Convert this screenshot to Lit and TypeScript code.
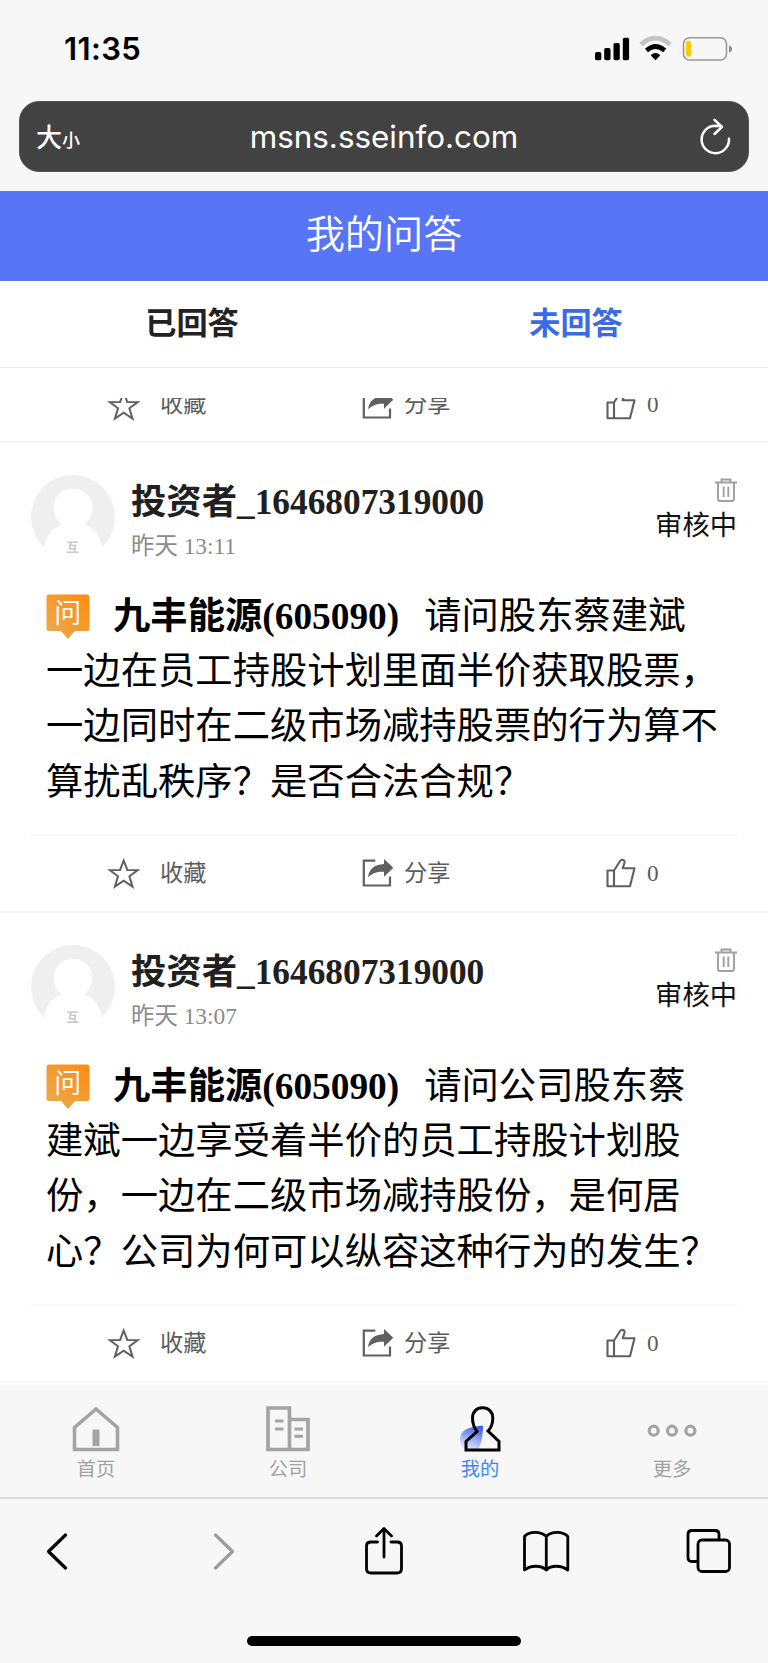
import { LitElement, html, css, svg } from "lit";
import { customElement, property } from "lit/decorators.js";

const cjk = css`"Noto Sans CJK SC"`;

const starIcon = svg`<path d="M16.700 3.500 L20.300 12.900 L30.700 13.100 L22.400 19.300 L25.500 29.600 L16.700 23.700 L7.900 29.600 L11 19.300 L2.700 13.100 L13.100 12.900 Z" fill="none" stroke="#606060" stroke-width="2"/>`;
const shareIcon = svg`<path d="M14.300 3.700 H2.800 V28.500 H29 V19.500" fill="none" stroke="#606060" stroke-width="2.200"/><path d="M23 2 L32.300 10.800 L23 19.800 V14.800 C15.500 14.600 11 16.500 7 20.500 C8 12 13 7.500 23 7 Z" fill="#606060"/>`;
const thumbIcon = svg`<path d="M2.500 13.500 H9 V29.300 H2.500 Z M9 13.500 L15.300 3.800 C16.500 1.800 20 2.800 19.600 5.500 L17.700 11.300 H29.500 L25 29.300 H9" fill="none" stroke="#606060" stroke-width="2.100" stroke-linejoin="round"/>`;

@customElement("action-row")
class ActionRow extends LitElement {
  static styles = css`
    :host { display: block; }
    .row { display: grid; grid-template-columns: 250px 256px 262px; height: 74px; box-sizing: border-box;
      font: 23.2px/28px "Liberation Serif", ${cjk}, serif; color: #5c5c5c; }
    .cell { display: flex; align-items: center; }
    .fav { padding-left: 107px; gap: 20px; }
    .share { padding-left: 111px; gap: 10px; }
    .like { padding-left: 99px; gap: 9px; }
    svg { width: 33px; height: 33px; flex: none; margin-top: 2px; }
    span { white-space: nowrap; }
  `;
  render() {
    return html`<div class="row">
      <div class="cell fav"><svg viewBox="0 0 33 33">${starIcon}</svg><span>收藏</span></div>
      <div class="cell share"><svg viewBox="0 0 33 33">${shareIcon}</svg><span>分享</span></div>
      <div class="cell like"><svg viewBox="0 0 33 33">${thumbIcon}</svg><span>0</span></div>
    </div>`;
  }
}

@customElement("question-card")
class QuestionCard extends LitElement {
  @property() time = "";
  @property({ attribute: false }) lines: string[] = [];
  static styles = css`
    :host { display: block; height: 470px; box-sizing: border-box; border-bottom: 2px solid #f7f7f7; background: #fff; }
    .card { padding: 32px 31px 0; }
    .head { display: flex; height: 84px; }
    .avatar { width: 84px; height: 84px; flex: none; }
    .who { margin-left: 16px; flex: 1; }
    .name { font: bold 35.35px/40px "Liberation Serif", ${cjk}, serif; color: #202020; padding-top: 8px; white-space: nowrap; }
    .time { font: 23.4px/28px "Liberation Serif", ${cjk}, serif; color: #8b8b8b; padding-top: 9px; }
    .state { display: flex; flex-direction: column; align-items: flex-end; padding-top: 1px; }
    .state svg { width: 24px; height: 26px; }
    .state span { font: 27.300px/30px ${cjk}, sans-serif; color: #111; margin-top: 6px; }
    .text { margin: 30px 0 0 15px; font: 37.35px/55.2px "Liberation Serif", ${cjk}, serif; color: #000; white-space: nowrap; }
    .line { height: 55.200px; display: flex; align-items: center; }
    .line b { margin: 0 25px 0 23px; }
    .badge { width: 44px; height: 46px; flex: none; }
    .rule { height: 2px; background: #f7f7f7; margin-top: 24px; }
    .foot { margin: 0 -31px; }
  `;
  render() {
    return html`<div class="card">
      <div class="head">
        <svg class="avatar" viewBox="0 0 84 84">
          <circle cx="42" cy="42" r="42" fill="#efefef"/>
          <path d="M42 13.500 C53 13.500 61.500 22 61.500 33 C61.500 41 57 46 53.500 49.500 C64 53 69 61 71.500 74 L66 84 H18 L12.500 74 C15 61 20 53 30.500 49.500 C27 46 22.500 41 22.500 33 C22.500 22 31 13.500 42 13.500 Z" fill="#fff"/>
          <text x="41.500" y="77" text-anchor="middle" font-family="Noto Sans CJK SC" font-size="12.500" font-weight="700" fill="#c8c8c8">互</text>
        </svg>
        <div class="who"><div class="name">投资者_1646807319000</div><div class="time">昨天 ${this.time}</div></div>
        <div class="state">
          <svg viewBox="0 0 24 26" fill="none" stroke="#a0a0a0" stroke-width="1.900"><path d="M2 6.500 H24 M8.500 6 V3.500 H17.500 V6 M5 6.500 V23 Q5 25 7 25 H19 Q21 25 21 23 V6.500 M10.700 10.500 V21 M15.300 10.500 V21"/></svg>
          <span>审核中</span>
        </div>
      </div>
      <div class="text">
        <div class="line">
          <svg class="badge" viewBox="0 0 44 46">
            <defs><linearGradient id="g" x1="0" y1="1" x2="1" y2="0"><stop offset="0" stop-color="#e9ad50"/><stop offset="1" stop-color="#ff8a12"/></linearGradient></defs>
            <path d="M3 .5 H41 Q43.500 .5 43.500 3 V34.500 Q43.500 37 41 37 H29 L22 45 L15 37 H3 Q.5 37 .5 34.500 V3 Q.5 .5 3 .5 Z" fill="url(#g)"/>
            <text x="21.800" y="28.800" text-anchor="middle" font-family="Noto Sans CJK SC" font-size="27" fill="#fff">问</text>
          </svg><b>九丰能源(605090)</b><span>${this.lines[0]}</span>
        </div>
        ${this.lines.slice(1).map((l) => html`<div class="line"><span>${l}</span></div>`)}
      </div>
      <div class="rule"></div>
      <action-row class="foot"></action-row>
    </div>`;
  }
}

@customElement("app-root")
class AppRoot extends LitElement {
  static styles = css`
    :host { display: block; width: 768px; height: 1663px; overflow: hidden; background: #f7f7f7; font-family: Inter, ${cjk}, sans-serif; }
    svg { display: block; flex: none; }
    .status { height: 101px; box-sizing: border-box; padding: 36px 36px 0 64px; display: flex; justify-content: space-between; align-items: flex-start; }
    .clock { font-size: 31px; line-height: 26px; font-weight: 600; letter-spacing: .35px; }
    .url { margin: 0 19px; height: 71px; box-sizing: border-box; border-radius: 20px; background: #424242; color: #fff; display: grid; grid-template-columns: 80px 1fr 80px; align-items: center; border: 1px solid #555; }
    .size { padding: 1px 0 0 16px; font: 500 26px/30px ${cjk}, sans-serif; white-space: nowrap; }
    .size small { font-size: 18px; }
    .host { text-align: center; font-size: 31.400px; line-height: 40px; }
    .reload { justify-self: end; margin-right: 16px; }
    .title { margin-top: 19px; height: 90px; background: #5775f4; color: #fff; font: 350 39.200px/81px ${cjk}, sans-serif; text-align: center; }
    .tabs { height: 87px; box-sizing: border-box; border-bottom: 1px solid #e8e8e8; background: #fff; display: grid; grid-template-columns: 1fr 1fr; text-align: center; font: 600 31.200px/80px ${cjk}, sans-serif; color: #222; }
    .tabs .on { color: #3a6ae8; }
    .list { background: #fff; height: 1017px; padding-top: 30px; box-sizing: border-box; }
    .cut { height: 45px; box-sizing: border-box; border-bottom: 2px solid #f4f4f4; overflow: hidden; display: flex; align-items: flex-end; }
    .nav { height: 114px; box-sizing: border-box; border-bottom: 2px solid #dadada; display: grid; grid-template-columns: repeat(4, 1fr); padding-top: 20px; }
    .item { display: flex; flex-direction: column; align-items: center; color: #a2a2a2; font: 19.300px/26px ${cjk}, sans-serif; gap: 3px; }
    .item.on { color: #4285f8; }
    .tools { display: flex; justify-content: space-between; height: 108px; padding: 0 36px 2px 40px; align-items: center; box-sizing: border-box; }
    .bar { width: 274px; height: 10px; border-radius: 5px; background: #000; margin: 29px auto 0; }
  `;
  render() {
    return html`
      <div class="status">
        <div class="clock">11:35</div>
        <svg width="138" height="27" viewBox="594 36 138 27">
          <rect x="595" y="52" width="6.300" height="8.300" rx="1.800"/><rect x="604.200" y="48" width="6.300" height="12.300" rx="1.800"/><rect x="613.500" y="43" width="6.300" height="17.300" rx="1.800"/><rect x="622.800" y="37.700" width="6.300" height="22.600" rx="1.800"/>
          <path d="M641 44.500 Q655.500 31.500 670 44.500" fill="none" stroke="#c4c4c4" stroke-width="4.600"/>
          <path d="M646.500 50.500 Q655.500 42.500 664.700 50.500" fill="none" stroke="#000" stroke-width="4.600"/>
          <path d="M650.700 55.200 Q655.500 50.800 660.300 55.200 L655.500 60.300 Z"/>
          <rect x="683.500" y="37.800" width="43" height="22.200" rx="6" fill="none" stroke="#999" stroke-width="1.600"/>
          <rect x="686" y="41" width="5.300" height="15.500" rx="2" fill="#ffcc00"/>
          <path d="M729 45.500 Q732 46.500 732 49 Q732 51.500 729 52.500 Z" fill="#888"/>
        </svg>
      </div>
      <div class="url">
        <div class="size">大<small>小</small></div>
        <div class="host">msns.sseinfo.com</div>
        <svg class="reload" width="32" height="38" viewBox="700 118 32 38" fill="none" stroke="#fff" stroke-width="2.500" stroke-linecap="round" stroke-linejoin="round"><path d="M729 138.800 A13.700 13.700 0 1 1 715.300 125.800 L721.500 126.300 M714.500 119.800 L722 126.800 L714.500 134"/></svg>
      </div>
      <div class="title">我的问答</div>
      <div class="tabs"><div>已回答</div><div class="on">未回答</div></div>
      <div class="list">
        <div class="cut"><action-row></action-row></div>
        <question-card time="13:11" .lines=${["请问股东蔡建斌", "一边在员工持股计划里面半价获取股票，", "一边同时在二级市场减持股票的行为算不", "算扰乱秩序？是否合法合规？"]}></question-card>
        <question-card time="13:07" .lines=${["请问公司股东蔡", "建斌一边享受着半价的员工持股计划股", "份，一边在二级市场减持股份，是何居", "心？公司为何可以纵容这种行为的发生？"]}></question-card>
      </div>
      <div class="nav">
        <div class="item"><svg width="48" height="47" viewBox="0 0 48 47" fill="none" stroke="#a4a4a4" stroke-width="3.600"><path d="M2.500 44.500 V22.500 L24 4 L45.500 22.500 V44.500 Z"/><path d="M24 24.500 V41" stroke-width="7"/></svg>首页</div>
        <div class="item"><svg width="44" height="47" viewBox="266 1405 44 47" fill="none" stroke="#a4a4a4" stroke-width="3.700"><path d="M268 1449.500 V1408 H289.500 V1449.500 Z M289.500 1419.500 H308 V1449.500 H289.500"/><path d="M275 1421 H283.500 M275 1429 H283.500 M294.500 1429 H303 M294.500 1436.300 H303" stroke-width="2.900"/></svg>公司</div>
        <div class="item on"><svg width="44" height="47" viewBox="458 1405 44 47">
          <defs><linearGradient id="b" x1=".7" y1="0" x2=".35" y2="1"><stop offset="0" stop-color="#3d5be8"/><stop offset="1" stop-color="#e8effb"/></linearGradient></defs>
          <path d="M483 1425.500 C467 1427 460 1431 460 1439 C460 1446 463 1450 469 1450 H478 C481 1445 483 1436 483 1425.500 Z" fill="url(#b)"/>
          <path d="M466 1441.500 L477 1431.500 C474 1427.500 472.500 1423 472.500 1418 C472.500 1412 476.500 1407.800 482.500 1407.800 C488.500 1407.800 492.800 1412 492.800 1418 C492.800 1423 491.500 1427.500 488 1431 L499 1441.500 V1450 H466 Z" fill="none" stroke="#000" stroke-width="3"/></svg>我的</div>
        <div class="item"><svg width="50" height="47" viewBox="646.600 1405 50 47" fill="none" stroke="#a4a4a4" stroke-width="3.200"><circle cx="653.300" cy="1430.700" r="4.500"/><circle cx="671.600" cy="1430.700" r="4.500"/><circle cx="690" cy="1430.700" r="4.500"/></svg>更多</div>
      </div>
      <div class="tools">
        <svg width="48" height="50" viewBox="40 1527 48 50" fill="none" stroke="#000" stroke-width="3.200" stroke-linecap="round" stroke-linejoin="round"><path d="M65.500 1535 L48.500 1551.500 L65.500 1568"/></svg>
        <svg width="48" height="50" viewBox="201 1527 48 50" fill="none" stroke="#9c9c9c" stroke-width="3.200" stroke-linecap="round" stroke-linejoin="round"><path d="M215.500 1535 L232.500 1551.500 L215.500 1568"/></svg>
        <svg width="48" height="50" viewBox="362 1526.500 48 50" fill="none" stroke="#000" stroke-width="2.800" stroke-linecap="round" stroke-linejoin="round"><path d="M377.500 1541.500 H371 Q366.500 1541.500 366.500 1545.500 V1568 Q366.500 1572.500 371 1572.500 H397 Q401.500 1572.500 401.500 1568 V1545.500 Q401.500 1541.500 397 1541.500 H391 M384 1556.500 V1528.500 M376.500 1535.500 L384 1528 L391.500 1535.500"/></svg>
        <svg width="48" height="50" viewBox="523 1528 48 50" fill="none" stroke="#000" stroke-width="2.800" stroke-linejoin="round"><path d="M546.300 1571 C541 1566 531 1566 524.500 1571 V1537.500 C529 1532 541 1532 546.300 1537.500 C551 1532 563 1532 567.800 1537.500 V1571 C561 1566 551 1566 546.300 1571 V1537"/></svg>
        <svg width="48" height="50" viewBox="684 1528 48 50" fill="none" stroke="#000" stroke-width="2.800"><path d="M698 1562.500 H692 Q688 1562.500 688 1558.500 V1535.500 Q688 1531.500 692 1531.500 H715 Q719 1531.500 719 1535.500 V1541"/><rect x="698" y="1541" width="31.500" height="31.500" rx="4"/></svg>
      </div>
      <div class="bar"></div>
    `;
  }
}
